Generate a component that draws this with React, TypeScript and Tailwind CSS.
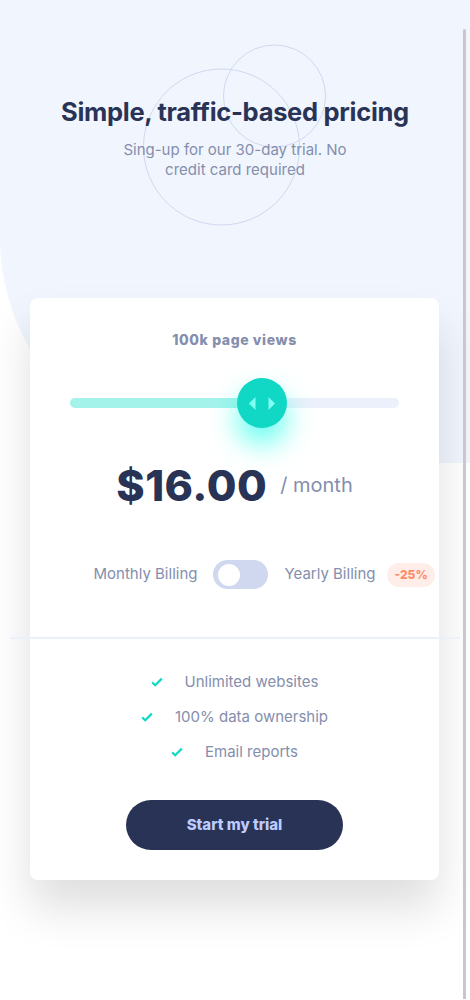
import { useState } from 'react';

const FEATURES = ['Unlimited websites', '100% data ownership', 'Email reports'];

function CheckIcon() {
  return (
    <svg width="12" height="10" viewBox="0 0 12 10" fill="none">
      <path d="M1.2 5.4l3 2.8L10.8 1.6" stroke="#10D8C4" strokeWidth="2.2" />
    </svg>
  );
}

function ThumbArrows() {
  return (
    <svg width="26" height="13" viewBox="0 0 26 13" fill="#80FFF3">
      <path d="M6.5 0v13L0 6.5z" />
      <path d="M19.5 0v13l6.5-6.5z" />
    </svg>
  );
}

export default function App() {
  const [yearly, setYearly] = useState(false);

  return (
    <div
      className="relative min-h-screen bg-white pb-[120px]"
      style={{ fontFamily: 'Inter, "Open Sans", sans-serif' }}
    >
      {/* Header with pattern */}
      <header className="relative h-[463px] bg-[#F1F5FE] rounded-bl-[226px] pt-[95px] text-center">
        <svg
          className="absolute left-0 top-0 pointer-events-none"
          width="470"
          height="240"
          viewBox="0 0 470 240"
          fill="none"
        >
          <circle cx="221.5" cy="147" r="78" stroke="#CFD8EF" strokeWidth="1" />
          <circle cx="274.5" cy="96" r="51" stroke="#CFD8EF" strokeWidth="1" />
        </svg>
        <div className="relative">
          <h1 className="text-[25.5px] leading-[34px] font-bold text-[#293356] tracking-[-0.3px]">
            Simple, traffic-based pricing
          </h1>
          <p className="mt-[11px] mx-auto max-w-[240px] text-[15px] leading-[20px] text-[#848EAD]">
            Sing-up for our 30-day trial. No credit card required
          </p>
        </div>
      </header>

      {/* Pricing card */}
      <main className="relative mx-[30px] -mt-[165px] w-[409px] rounded-lg bg-white shadow-[0_28px_45px_rgba(0,0,0,0.13)]">
        <div className="px-[40px] pt-[32px] pb-[47px] text-center">
          <p className="text-[14px] leading-[20px] font-extrabold tracking-[0.6px] text-[#848EAD]">
            100k page views
          </p>

          {/* Slider */}
          <div className="relative mt-[48px] h-[10px] rounded-full bg-[#ECF0FB]">
            <div className="h-full w-[192px] rounded-full bg-[#A4F3EB]" />
            <button className="absolute left-[167px] top-[-20px] flex h-[50px] w-[50px] items-center justify-center rounded-full bg-[#10D8C4] shadow-[0_16px_28px_rgba(0,255,231,0.6)]">
              <ThumbArrows />
            </button>
          </div>

          {/* Price */}
          <div className="mt-[49px] flex items-center justify-center gap-[13px]">
            <span className="text-[43px] leading-[56px] font-extrabold tracking-[0.5px] text-[#293356]">
              $16.00
            </span>
            <span className="text-[20px] text-[#848EAD]">/ month</span>
          </div>
        </div>

        {/* Billing toggle */}
        <div className="flex items-center justify-center gap-[16px] text-[15px] text-[#848EAD]">
          <span>Monthly Billing</span>
          <button
            onClick={() => setYearly(!yearly)}
            className="flex h-[29px] w-[55px] items-center rounded-full bg-[#CFD8EF] px-[5px]"
          >
            <span
              className={`h-[22px] w-[22px] rounded-full bg-white transition-transform ${
                yearly ? 'translate-x-[23px]' : ''
              }`}
            />
          </button>
          <span className="relative">
            Yearly Billing
            <span className="absolute left-[calc(100%+12px)] top-1/2 -translate-y-1/2 whitespace-nowrap rounded-full bg-[#FEEDE8] px-[7px] py-[4px] text-[12px] leading-[16px] font-extrabold text-[#FF8D68]">
              -25%
            </span>
          </span>
        </div>

        <hr className="mt-[48px] -mx-[20px] w-[450px] border-0 border-t-2 border-[#ECF0FB]" />

        {/* Features */}
        <ul className="mt-[32px] flex flex-col items-center gap-[13px] text-[15px] leading-[22px] text-[#848EAD]">
          {FEATURES.map((f) => (
            <li key={f} className="flex items-center gap-[22px]">
              <CheckIcon />
              <span>{f}</span>
            </li>
          ))}
        </ul>

        <div className="flex justify-center pt-[37px] pb-[30px]">
          <button className="h-[50px] w-[217px] rounded-full bg-[#293356] text-[15px] font-extrabold text-[#BDCCFF]">
            Start my trial
          </button>
        </div>
      </main>

      {/* Scrollbar thumb */}
      <div className="absolute right-[4px] top-[29px] h-[970px] w-[3px] rounded-t-full bg-[#C8C8C8]" />
    </div>
  );
}
